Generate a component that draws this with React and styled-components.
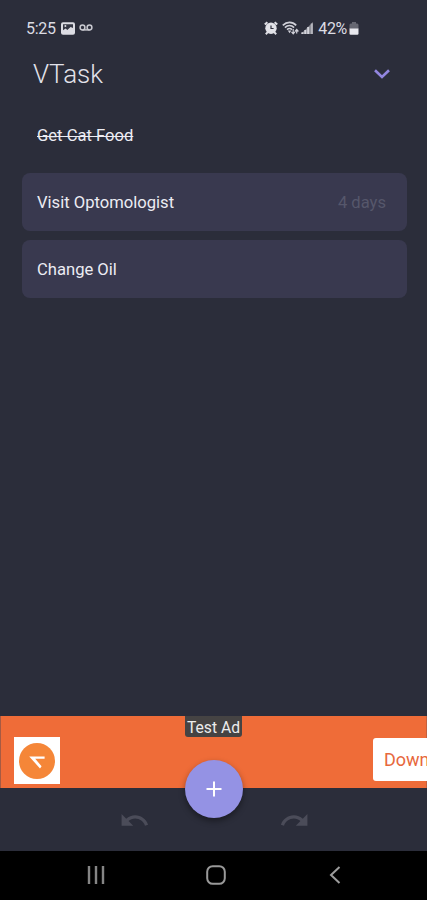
import React from 'react'
import { createGlobalStyle, styled } from 'styled-components';

const tasks = [
  { id: 1, name: 'Get Cat Food', done: true },
  { id: 2, name: 'Visit Optomologist', due: '4 days' },
  { id: 3, name: 'Change Oil' },
]

const StatusBar = () => {
  return (
    <StatusWrapper>
      <span className="time">5:25</span>
      <svg className="photo" width="14" height="13" viewBox="0 0 14 13">
        <rect x="0" y="0.3" width="14" height="12.4" rx="2" fill="#dcdce3" />
        <path d="M2 2.3h10v3.6L9.6 4.9 6.3 8 4.6 6.6 2 8.2z" fill="#353744" />
        <circle cx="4.4" cy="4.1" r="1" fill="#dcdce3" />
      </svg>
      <svg className="voicemail" width="14" height="8" viewBox="0 0 14 8" fill="none" stroke="#c9c9d0" strokeWidth="1.5">
        <circle cx="3.5" cy="3.5" r="2.4" />
        <circle cx="10.5" cy="3.5" r="2.4" />
        <path d="M3.5 5.9h7" />
      </svg>
      <div className="right">
        <svg width="14" height="14" viewBox="0 0 14 14">
          <path d="M.8 3.6 3.4 1.2M13.2 3.6l-2.6-2.4M1.8 13.2l2.4-2.6M12.2 13.2l-2.4-2.6" stroke="#dedee4" strokeWidth="2" />
          <circle cx="7" cy="7.2" r="5.7" fill="#e2e2e8" />
          <path d="M7 4.4v3.1h2.6" fill="none" stroke="#2d2f3c" strokeWidth="1.2" />
        </svg>
        <svg className="wifi" width="17" height="14" viewBox="0 0 17 14" fill="none" stroke="#d0d0d8">
          <path d="M.8 4.4C4.8.4 10.4.4 14.2 4.4" strokeWidth="1.7" />
          <path d="M2.9 6.6c2.7-2.7 6.5-2.7 9.2 0" strokeWidth="1.6" />
          <path d="M5 8.7c1.5-1.4 3.5-1.4 5 0" strokeWidth="1.6" />
          <path d="M5.8 9.6 7.6 12.3l1.7-2.7z" fill="#d0d0d8" stroke="none" />
          <path d="M11.2 8v4.6M9.5 10.8l1.7 2 1.7-2M14.7 12.6V8.6M13 10.5l1.7-2 1.7 2" strokeWidth="1.2" />
        </svg>
        <svg className="signal" width="12" height="12" viewBox="0 0 12 12">
          <path d="M0 12 12 0v12z" fill="#85868f" />
          <path d="M1.4 12v-1.8M4.3 12V8M7.2 12V5" stroke="#d4d4db" strokeWidth="2" />
          <path d="M10.8 12V1.5" stroke="#b4b4bc" strokeWidth="2" />
        </svg>
        <span>42%</span>
        <svg className="battery" width="10" height="13" viewBox="0 0 10 13">
          <path d="M3 0h4v1.4h1.2Q9.5 1.6 9.5 3v4h-9V3Q.5 1.6 1.8 1.4H3z" fill="#666772" />
          <path d="M.5 6.5h9v5q0 1.2-1.2 1.2H1.7Q.5 12.7.5 11.5z" fill="#e8e8ee" />
        </svg>
      </div>
    </StatusWrapper>
  )
}

const Header = () => {
  return (
    <HeaderWrapper>
      <h1>VTask</h1>
      <svg width="18" height="12" viewBox="0 0 18 12" fill="none" stroke="#9286df" strokeWidth="2.6">
        <path d="M2 2.2 9 9l7-6.8" />
      </svg>
    </HeaderWrapper>
  )
}

const SingleTask = ({ items }) => {
  return (
    <Task $done={items.done}>
      <span className="name">{items.name}</span>
      {items.due && <span className="due">{items.due}</span>}
    </Task>
  )
}

const AdBanner = () => {
  return (
    <Ad>
      <div className="logo">
        <svg width="36" height="36" viewBox="0 0 36 36">
          <circle cx="18" cy="18" r="18" fill="#f58638" />
          <path d="M10.2 13.4h15.4v2.4h-9.4l6.4 7.4-1.6 2.3z" fill="#fff" />
        </svg>
      </div>
      <div className="download">Down</div>
      <span className="label">Test Ad</span>
    </Ad>
  )
}

const arrow = 'M12.5 8c-2.65 0-5.05.99-6.9 2.6L2 7v9h9l-3.62-3.62c1.39-1.16 3.16-1.88 5.12-1.88 3.54 0 6.55 2.31 7.6 5.5l2.37-.78C21.08 11.03 17.15 8 12.5 8z'

const App = () => {
  return (
    <Screen>
      <GlobalStyle />
      <StatusBar />
      <Header />
      <TaskList>
        {
          tasks.map((items) => {
            return <SingleTask key={items.id} items={items} />
          })
        }
      </TaskList>
      <AdBanner />
      <BottomBar>
        <ArrowIcon viewBox="0 0 24 24"><path d={arrow} /></ArrowIcon>
        <ArrowIcon $flip viewBox="0 0 24 24"><path d={arrow} /></ArrowIcon>
        <AddButton aria-label="Add task">
          <svg width="16" height="16" viewBox="0 0 16 16" stroke="#fff" strokeWidth="2">
            <path d="M8 .5v15M.5 8h15" />
          </svg>
        </AddButton>
      </BottomBar>
      <NavBar>
        <svg width="18" height="18" viewBox="0 0 18 18" stroke="#858585" strokeWidth="2.4">
          <path d="M2 0v18M9 0v18M16 0v18" />
        </svg>
        <svg className="home" width="20" height="20" viewBox="0 0 20 20" fill="none" stroke="#999" strokeWidth="2">
          <rect x="1.2" y="1.2" width="17.6" height="17.6" rx="5.5" />
        </svg>
        <svg width="12" height="18" viewBox="0 0 12 18" fill="none" stroke="#9c9c9c" strokeWidth="2">
          <path d="M10.5 1 2 9l8.5 8" />
        </svg>
      </NavBar>
    </Screen>
  )
}

export default App;

const GlobalStyle = createGlobalStyle`
* {
    box-sizing: border-box;
}
body {
    margin: 0;
    background: #2b2d3a;
    font-family: Roboto, sans-serif;
}
svg {
    display: block;
    flex-shrink: 0;
}
`

const Screen = styled.div`
display: flex;
flex-direction: column;
width: 427px;
height: 900px;
overflow: hidden;
background: #2b2d3a;
`

const StatusWrapper = styled.div`
display: flex;
align-items: center;
height: 56px;
padding: 0 68px 0 26px;
color: #dcdce3;
font-size: 16px;
letter-spacing: -0.3px;

.time{
    width: 35px;
}
.voicemail{
    margin: 0 0 1px 4px;
}
.right{
    display: flex;
    align-items: center;
    margin-left: auto;
}
.wifi{
    margin: 0 2px 0 4px;
}
.signal{
    margin-right: 5px;
}
.battery{
    margin-left: 2px;
}
`

const HeaderWrapper = styled.div`
display: flex;
align-items: center;
justify-content: space-between;
height: 36px;
padding: 0 36px 0 33px;

h1{
    margin: 0;
    color: #e2e2ea;
    font-size: 26px;
    font-weight: 300;
}
`

const TaskList = styled.div`
flex: 1;
display: flex;
flex-direction: column;
gap: 9px;
padding: 14px 20px 0 22px;
`

const Task = styled.div`
display: flex;
align-items: center;
justify-content: space-between;
height: 58px;
padding: 0 21px 0 15px;
border-radius: 8px;
background: ${(props) => (props.$done ? 'transparent' : '#39394f')};
color: #ececf3;
font-size: 16.6px;

.name{
    text-decoration: ${(props) => (props.$done ? 'line-through 1px' : 'none')};
}
.due{
    color: #56576b;
}
`

const Ad = styled.div`
position: relative;
display: flex;
align-items: flex-start;
justify-content: space-between;
height: 72px;
padding: 21px 0 0 14px;
background: #ef6c38;
box-shadow: inset 1px 0 #a65a43, inset -1px 0 #c4613e;

.logo{
    display: grid;
    place-items: center;
    width: 46px;
    height: 47px;
    background: #fff;
}
.download{
    display: flex;
    align-items: center;
    width: 54px;
    height: 43px;
    margin-top: 1px;
    padding-left: 11px;
    overflow: hidden;
    border-radius: 3px 0 0 3px;
    background: #fff;
    color: #e7683c;
    font-size: 18px;
}
.label{
    position: absolute;
    top: 0;
    left: 185px;
    width: 57px;
    height: 21px;
    border-radius: 0 0 3px 3px;
    background: #454343;
    color: #ececec;
    font-size: 15.7px;
    line-height: 24px;
    text-align: center;
    white-space: nowrap;
}
`

const BottomBar = styled.div`
position: relative;
display: flex;
align-items: center;
justify-content: space-between;
height: 63px;
padding: 1px 117px 0 119px;
`

const ArrowIcon = styled.svg`
width: 31px;
height: 31px;
fill: #4b4c59;
transform: ${(props) => (props.$flip ? 'scaleX(-1)' : 'none')};
`

const AddButton = styled.button`
position: absolute;
top: -28px;
left: 185px;
display: grid;
place-items: center;
width: 58px;
height: 58px;
padding: 0;
border: 0;
border-radius: 50%;
background: #9492e4;
box-shadow: 0 3px 6px rgba(0, 0, 0, 0.4);
`

const NavBar = styled.div`
display: flex;
align-items: center;
justify-content: space-between;
height: 49px;
padding: 0 86px 2px 87px;
background: #000;

.home{
    margin-right: 3px;
}
`
